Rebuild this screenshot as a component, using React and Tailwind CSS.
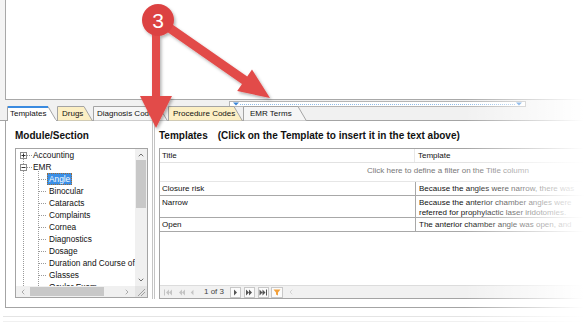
import React from 'react';
import { ChevronUp, ChevronDown, ChevronLeft, ChevronRight } from 'lucide-react';

const tabs = [
  { label: 'Templates', w: 50, cls: 'w-[50px] pl-[3px]', fill: '#ffffff', active: true },
  { label: 'Drugs', w: 36, cls: 'w-[36px] pl-[5px]', fill: '#fcefc4' },
  { label: 'Diagnosis Codes', w: 75, cls: 'w-[75px] pl-[4px]', fill: '#f6f6f6' },
  { label: 'Procedure Codes', w: 75, cls: 'w-[75px] pl-[5px]', fill: '#fcefc4' },
  { label: 'EMR Terms', w: 64, cls: 'w-[64px] pl-[7px]', fill: '#f6f6f6' },
];

const sections = [
  'Angle',
  'Binocular',
  'Cataracts',
  'Complaints',
  'Cornea',
  'Diagnostics',
  'Dosage',
  'Duration and Course of',
  'Glasses',
  'Ocular Exam',
];

const rows = [
  { title: 'Closure risk', lines: ['Because the angles were narrow, there was'], h: 'h-[14px]' },
  {
    title: 'Narrow',
    lines: ['Because the anterior chamber angles were', 'referred for prophylactic laser iridotomies.'],
    h: 'h-[22px]',
  },
  { title: 'Open', lines: ['The anterior chamber angle was open, and'], h: 'h-[14px]' },
];

function Tab({ label, w, cls, fill, active }) {
  return (
    <div className={`relative h-[14px] shrink-0 ${active ? 'z-10 -mb-px h-[15px]' : ''}`}>
      <svg className="absolute left-0 top-0" width={w} height={15}>
        <polygon points={`0.5,15 0.5,0.5 ${w - 9},0.5 ${w - 0.5},15`} fill={fill} stroke="#a4a4a4" />
        {active && <line x1="1" y1="1" x2={w - 9} y2="1" stroke="#3b8be0" strokeWidth="2" />}
        {active && <line x1="1" y1="14.5" x2={w - 1} y2="14.5" stroke="#ffffff" strokeWidth="1.5" />}
      </svg>
      <div className={`relative ${cls} pt-[3px] text-[8px] leading-[10px] whitespace-nowrap text-[#111]`}>{label}</div>
    </div>
  );
}

function TreeLines() {
  const dots = { stroke: '#9a9a9a', strokeDasharray: '1 1', strokeWidth: 1 };
  return (
    <svg className="absolute left-0 top-0" width="119" height="137">
      <line x1="7.5" y1="10" x2="7.5" y2="137" {...dots} />
      <line x1="11" y1="6.5" x2="17" y2="6.5" {...dots} />
      <line x1="11" y1="18.5" x2="17" y2="18.5" {...dots} />
      <line x1="22.5" y1="22" x2="22.5" y2="137" {...dots} />
      {sections.map((_, i) => (
        <line key={i} x1="23" y1={30.5 + i * 12} x2="31" y2={30.5 + i * 12} {...dots} />
      ))}
      <rect x="4.5" y="3.5" width="6" height="6" fill="#fff" stroke="#8c8c8c" />
      <line x1="5.5" y1="6.5" x2="9.5" y2="6.5" stroke="#333" />
      <line x1="7.5" y1="4.5" x2="7.5" y2="8.5" stroke="#333" />
      <rect x="4.5" y="15.5" width="6" height="6" fill="#fff" stroke="#8c8c8c" />
      <line x1="5.5" y1="18.5" x2="9.5" y2="18.5" stroke="#333" />
    </svg>
  );
}

function PagerIcon({ kind, color }) {
  const paths = {
    first: 'M1 0.5h1v6H1Z M6 0.5L3 3.5L6 6.5Z M9 0.5L6 3.5L9 6.5Z',
    prevPage: 'M5 0.5L2 3.5L5 6.5Z M8 0.5L5 3.5L8 6.5Z',
    prev: 'M5 0.5L2 3.5L5 6.5Z',
    next: 'M3 0.5L6 3.5L3 6.5Z',
    nextPage: 'M1 0.5L4 3.5L1 6.5Z M4 0.5L7 3.5L4 6.5Z',
    last: 'M0.5 0.5L3.5 3.5L0.5 6.5Z M3.5 0.5L6.5 3.5L3.5 6.5Z M7 0.5h1v6H7Z',
  };
  return (
    <svg width="9" height="7" viewBox="0 0 9 7">
      <path d={paths[kind]} fill={color} />
    </svg>
  );
}

function Pager() {
  return (
    <div className="flex h-[13px] shrink-0 items-center border-t border-[#dcdcdc] bg-[#f1f1f1]">
      <span className="ml-[2px] flex w-[10px] justify-center"><PagerIcon kind="first" color="#c4c4c4" /></span>
      <span className="ml-[4px] flex w-[10px] justify-center"><PagerIcon kind="prevPage" color="#c4c4c4" /></span>
      <span className="ml-[3px] flex w-[8px] justify-center"><PagerIcon kind="prev" color="#c4c4c4" /></span>
      <span className="ml-[7px] text-[8px] leading-[10px] text-[#444]">1 of 3</span>
      <span className="ml-[6px] flex h-[11px] w-[11px] items-center justify-center border border-[#c8c8c8] bg-[#fbfbfb]">
        <PagerIcon kind="next" color="#555" />
      </span>
      <span className="ml-[3px] flex h-[11px] w-[11px] items-center justify-center border border-[#c8c8c8] bg-[#fbfbfb]">
        <PagerIcon kind="nextPage" color="#555" />
      </span>
      <span className="ml-[3px] flex h-[11px] w-[11px] items-center justify-center border border-[#c8c8c8] bg-[#fbfbfb]">
        <PagerIcon kind="last" color="#555" />
      </span>
      <span className="ml-[2px] flex h-[11px] w-[12px] items-center justify-center border border-[#c8c8c8] bg-[#fbfbfb]">
        <svg width="8" height="7" viewBox="0 0 8 7">
          <path d="M0.5 0.5h7L5 3.5v3L3 5.5v-2Z" fill="#f2a03a" />
        </svg>
      </span>
      <ChevronLeft className="ml-[4px] h-[8px] w-[8px] text-[#c4c4c4]" strokeWidth={2} />
    </div>
  );
}

function SectionTree() {
  return (
    <div className="flex h-[150px] w-[133px] flex-col border border-[#a4a4a4] bg-white">
      <div className="flex min-h-0 flex-1">
        <div className="relative flex-1 overflow-hidden text-[8.3px] leading-[12px] text-[#111]">
          <TreeLines />
          <div className="relative">
            <div className="h-[12px] pl-[17px]">Accounting</div>
            <div className="h-[12px] pl-[17px]">EMR</div>
            {sections.map((s, i) => (
              <div key={s} className="flex h-[12px] items-center pl-[31px] whitespace-nowrap">
                {i === 0 ? (
                  <span className="border border-dotted border-[#9b6a35] bg-[#3b8fe6] px-[1px] leading-[10px] text-white">{s}</span>
                ) : (
                  <span className="pl-[2px]">{s}</span>
                )}
              </div>
            ))}
          </div>
        </div>
        <div className="flex w-[12px] flex-col items-center bg-[#f0f0f0]">
          <ChevronUp className="mt-[2px] h-[8px] w-[8px] text-[#555]" strokeWidth={2.5} />
          <div className="mt-[1px] h-[48px] w-[10px] bg-[#c8c8c8]" />
          <div className="flex-1" />
          <ChevronDown className="mb-[2px] h-[8px] w-[8px] text-[#555]" strokeWidth={2.5} />
        </div>
      </div>
      <div className="flex h-[11px] items-center bg-[#f0f0f0]">
        <ChevronLeft className="ml-[3px] h-[8px] w-[8px] text-[#888]" strokeWidth={2} />
        <div className="ml-[3px] h-[9px] w-[74px] bg-[#c8c8c8]" />
        <div className="flex-1" />
        <ChevronRight className="mr-[4px] h-[8px] w-[8px] text-[#888]" strokeWidth={2} />
        <div className="relative h-[11px] w-[12px] bg-[#e4e4e4]">
          <svg className="absolute left-0 top-0" width="12" height="11">
            <path d="M10 3L3 10 M10 6L6 10" stroke="#a0a0a0" />
          </svg>
        </div>
      </div>
    </div>
  );
}

function TemplateGrid() {
  return (
    <div className="flex h-[151px] w-[600px] flex-col border-l border-t border-b border-[#a4a4a4] bg-white text-[8px] text-[#111]">
      <div className="flex h-[14px] shrink-0 border-b border-[#e2e2e2] leading-[13px]">
        <div className="w-[255px] border-r border-[#e8e8e8] pl-[2px]">Title</div>
        <div className="pl-[3px]">Template</div>
      </div>
      <div className="h-[18px] shrink-0 bg-white pl-[207px] leading-[15px] text-[#777]">
        Click here to define a filter on the Title column
      </div>
      <div className="h-[1px] shrink-0 bg-[#e6e6e6]" />
      {rows.map((r) => (
        <div key={r.title} className={`flex ${r.h} shrink-0 border-b border-[#a8a8a8]`}>
          <div className="w-[255px] pl-[2px] pt-[2px] leading-[10px]">{r.title}</div>
          <div className="flex-1 border-l border-[#a8a8a8] pl-[3px] pt-[2px] leading-[10px] whitespace-nowrap">
            {r.lines.map((l) => (
              <div key={l}>{l}</div>
            ))}
          </div>
        </div>
      ))}
      <div className="flex-1" />
      <Pager />
    </div>
  );
}

function Callout() {
  return (
    <svg className="pointer-events-none absolute left-0 top-0 z-20" width="584" height="331">
      <defs>
        <filter id="callout-shadow" x="-20%" y="-20%" width="140%" height="140%">
          <feDropShadow dx="1.5" dy="2" stdDeviation="1.5" floodColor="#000" floodOpacity="0.3" />
        </filter>
      </defs>
      <g filter="url(#callout-shadow)" fill="#e24b4a">
        <polygon points="152,30 160,30 160,96 172,96 156,128 140,96 152,96" />
        <polygon points="160.6,16.3 247.2,76.6 252,69.6 270,98 237.2,91 242,84 155.4,23.7" />
        <circle cx="158" cy="20" r="16" fill="#dc4343" />
      </g>
      <text x="158" y="27.5" textAnchor="middle" fontSize="21" fill="#fff" fontFamily="Liberation Sans, Arial, sans-serif">
        3
      </text>
    </svg>
  );
}

export default function App() {
  return (
    <div className="relative h-[331px] w-[584px] overflow-hidden bg-white font-['Liberation_Sans',Arial,sans-serif]">
      {/* note editor */}
      <div className="flex h-[100px]">
        <div className="w-[5px] bg-[#f4f4f4]" />
        <div className="flex-1 border-b border-l border-[#a8a8a8] bg-white" />
      </div>

      {/* splitter */}
      <div className="flex h-[7px] bg-[#f1f1f1] pl-[229px]">
        <div className="relative mt-[1px] h-[6px] w-[297px] border border-[#b4b4b4] bg-white">
          <div className="mx-[10px] mt-[1.5px] border-t border-dotted border-[#8fbbe8]" />
          <svg className="absolute left-[3px] top-0" width="6" height="4">
            <path d="M0 0.5h6L3 3.5Z" fill="#3b86d8" />
          </svg>
          <svg className="absolute right-[3px] top-0" width="6" height="4">
            <path d="M0 0.5h6L3 3.5Z" fill="#3b86d8" />
          </svg>
        </div>
      </div>

      {/* tab strip */}
      <div className="flex h-[14px] items-end border-b border-[#a4a4a4] bg-[#f1f1f1] pl-[7px]">
        {tabs.map((t) => (
          <Tab key={t.label} {...t} />
        ))}
      </div>

      {/* templates panel */}
      <div className="ml-[5px] flex h-[187px] border-b border-l border-[#a4a4a4] bg-white">
        <div className="w-[139px] shrink-0 pl-[9px] pt-[9px]">
          <div className="mb-[6px] text-[10px] font-bold leading-[12px] text-[#111]">Module/Section</div>
          <SectionTree />
        </div>
        <div className="mb-[8px] ml-[7px] mr-[4px] w-[3px] shrink-0 border-x border-[#c4c4c4]" />
        <div className="min-w-0 flex-1 pt-[9px]">
          <div className="mb-[6px] flex whitespace-nowrap text-[10px] font-bold leading-[12px] text-[#111]">
            <span>Templates</span>
            <span className="ml-[10px]">(Click on the Template to insert it in the text above)</span>
          </div>
          <TemplateGrid />
        </div>
      </div>

      {/* drop shadow under the panel */}
      <div className="ml-[3px] mt-[8px] h-[1px] bg-[#e4e4e4]" />
      <div className="ml-[3px] mt-[4px] h-[1px] bg-[#f0f0f0]" />

      {/* right edge fade */}
      <div className="pointer-events-none absolute right-0 top-0 z-10 h-full w-[120px] bg-linear-to-r from-white/0 to-white" />

      <Callout />
    </div>
  );
}
